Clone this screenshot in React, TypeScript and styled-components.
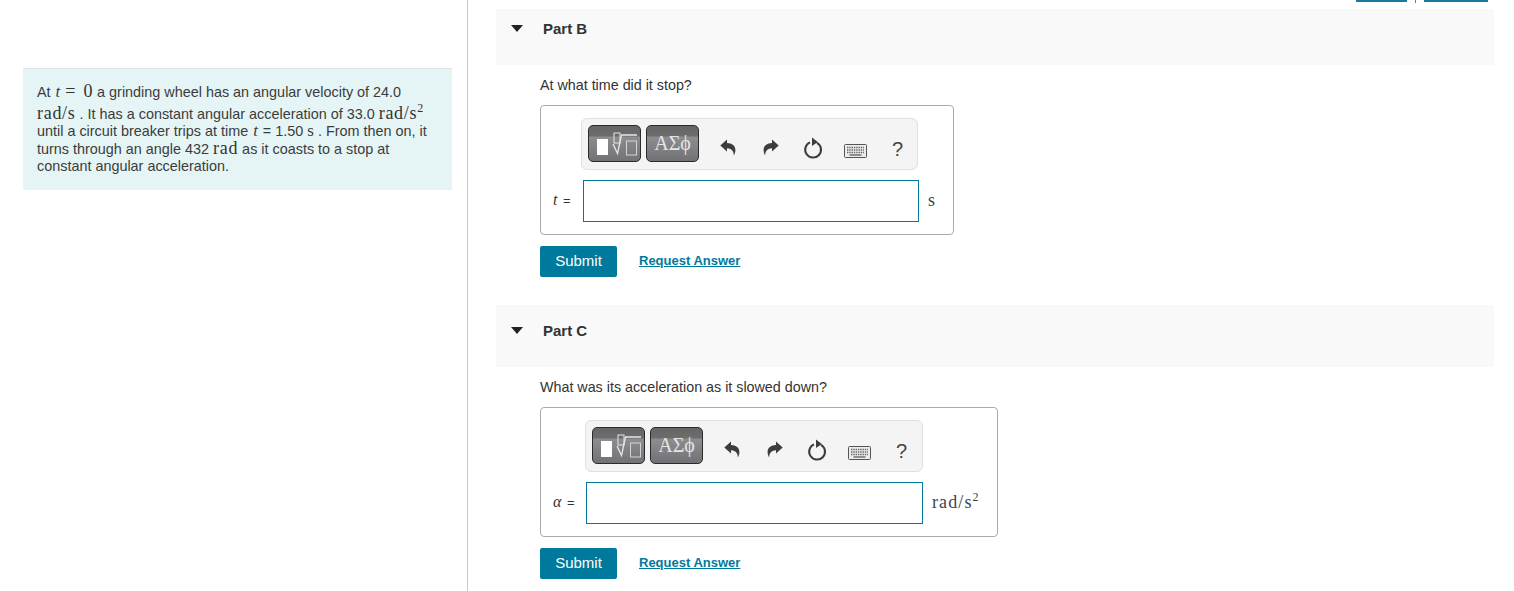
import React from "react";
import styled, { createGlobalStyle } from "styled-components";

const GlobalStyle = createGlobalStyle`
  html, body {
    margin: 0;
    padding: 0;
    background: #fff;
    overflow: hidden;
  }
  body {
    font-family: "Liberation Sans", Arial, sans-serif;
    font-size: 14px;
    color: #333;
  }
`;

function UndoIcon({ flip }: { flip?: boolean }) {
  return (
    <svg width="16" height="17" viewBox="0 0 16 17" style={flip ? { transform: "scaleX(-1)" } : undefined}>
      <path
        d="M0.3 6.4 L7 0.6 V4 C12 4 15.6 6.8 15.4 11.4 C15.3 13 14.8 14.8 13.8 16.6 C13.9 13.2 12.4 9.2 7 9.2 V12.4 Z"
        fill="#3d3d3d"
      />
    </svg>
  );
}

function ResetIcon() {
  return (
    <svg width="20" height="22" viewBox="0 0 20 22">
      <path d="M7 5.4 A7.9 7.9 0 1 0 14 5.8" fill="none" stroke="#3d3d3d" strokeWidth="2.1" />
      <path d="M9 0.6 L14.8 5 L9 9 Z" fill="#3d3d3d" />
    </svg>
  );
}

function KeyboardIcon() {
  return (
    <svg width="23" height="14" viewBox="0 0 23 14">
      <rect x="0.5" y="0.5" width="22" height="13" rx="1" fill="#ececec" stroke="#555" />
      <path d="M3 3.5 H20 M3 6 H20 M3 8.5 H20" stroke="#666" strokeWidth="1.4" strokeDasharray="1.4 0.9" />
      <path d="M5.5 11 H17.5" stroke="#666" strokeWidth="1.4" />
    </svg>
  );
}

function TemplateIcon() {
  return (
    <svg width="51" height="35" viewBox="0 0 51 35">
      <rect x="8" y="13" width="11" height="16" fill="#fff" />
      <rect x="25" y="7" width="6" height="10" fill="none" stroke="#e6e6e6" strokeWidth="1" />
      <path d="M24 18 L28.5 27.5 L32.5 9 H48" fill="none" stroke="#e6e6e6" strokeWidth="1.3" />
      <rect x="37.5" y="15" width="10" height="14" fill="none" stroke="#d4d4d4" strokeWidth="1" />
    </svg>
  );
}

interface IPart {
  title: string;
  question: string;
  symbol: string;
  unit: React.ReactNode;
  headerHeight: number;
  titleTop: number;
  toolbarLeft: number;
  toolbarWidth: number;
  labelWidth: number;
  inputWidth: number;
  boxWidth: number;
  spaced?: boolean;
}

function Part({
  title,
  question,
  symbol,
  unit,
  headerHeight,
  titleTop,
  toolbarLeft,
  toolbarWidth,
  labelWidth,
  inputWidth,
  boxWidth,
  spaced,
}: IPart) {
  return (
    <PartSection $spaced={spaced}>
      <PartHeader $height={headerHeight} $top={titleTop}>
        <Caret />
        <PartTitle>{title}</PartTitle>
      </PartHeader>
      <PartBody>
        <Question>{question}</Question>
        <AnswerBox $width={boxWidth}>
          <Toolbar $left={toolbarLeft} $width={toolbarWidth}>
            <ToolGroup>
              <ToolButton>
                <TemplateIcon />
              </ToolButton>
              <ToolButton>
                <GreekLabel>ΑΣϕ</GreekLabel>
              </ToolButton>
            </ToolGroup>
            <ToolIcon $left={21} $top={7}><UndoIcon /></ToolIcon>
            <ToolIcon $left={27} $top={7}><UndoIcon flip /></ToolIcon>
            <ToolIcon $left={24} $top={8}><ResetIcon /></ToolIcon>
            <ToolIcon $left={21} $top={14}><KeyboardIcon /></ToolIcon>
            <Help>?</Help>
          </Toolbar>
          <AnswerRow>
            <SymbolLabel $width={labelWidth}>
              <LabelMath>{symbol}</LabelMath> =
            </SymbolLabel>
            <AnswerInput $width={inputWidth} />
            <Unit>{unit}</Unit>
          </AnswerRow>
        </AnswerBox>
        <Actions>
          <SubmitButton>Submit</SubmitButton>
          <RequestLink href="#">Request Answer</RequestLink>
        </Actions>
      </PartBody>
    </PartSection>
  );
}

export default function App() {
  return (
    <Page>
      <GlobalStyle />
      <LeftColumn>
        <ProblemBox>
          At <MathItalic>t</MathItalic> <MathText>= 0</MathText> a grinding wheel has an angular velocity of 24.0{" "}
          <MathText>rad/s</MathText> . It has a constant angular acceleration of 33.0{" "}
          <MathText>
            rad/s<sup>2</sup>
          </MathText>{" "}
          until a circuit breaker trips at time <MathItalic>t</MathItalic> = 1.50 <SmallMath>s</SmallMath> . From then on, it
          turns through an angle 432 <MathText>rad</MathText> as it coasts to a stop at constant angular acceleration.
        </ProblemBox>
      </LeftColumn>
      <RightColumn>
        <TopLinks>
          <TopLink $width={51} />
          <TopDivider />
          <TopLink $width={64} />
        </TopLinks>
        <Part
          title="Part B"
          question="At what time did it stop?"
          symbol="t"
          unit="s"
          headerHeight={56}
          titleTop={12}
          toolbarLeft={40}
          toolbarWidth={337}
          labelWidth={42}
          inputWidth={336}
          boxWidth={414}
        />
        <Part
          spaced
          title="Part C"
          question="What was its acceleration as it slowed down?"
          symbol="α"
          unit={
            <>
              rad/s<sup>2</sup>
            </>
          }
          headerHeight={62}
          titleTop={18}
          toolbarLeft={44}
          toolbarWidth={338}
          labelWidth={45}
          inputWidth={337}
          boxWidth={458}
        />
      </RightColumn>
    </Page>
  );
}

const Page = styled.div`
  display: flex;
  width: 1514px;
  height: 591px;
  overflow: hidden;
`;

const LeftColumn = styled.aside`
  box-sizing: border-box;
  width: 468px;
  height: 591px;
  flex-shrink: 0;
  padding: 68px 15px 0 23px;
  border-right: 1px solid #c8c8c8;
`;

const ProblemBox = styled.div`
  box-sizing: border-box;
  width: 429px;
  height: 122px;
  padding: 15px 20px 0 14px;
  background: #e5f5f6;
  border-top: 1px solid #dfe5e6;
  font-size: 14.4px;
  line-height: 17.5px;
  color: #3c3c3c;

  sup {
    font-size: 12px;
    line-height: 12px;
    vertical-align: 7px;
  }
`;

const MathText = styled.span`
  font-family: "Liberation Serif", "DejaVu Serif", serif;
  font-size: 18px;
  line-height: 0;
  letter-spacing: 0.7px;
  word-spacing: 2px;
  color: #333;
`;

const SmallMath = styled.span`
  font-family: "Liberation Serif", "DejaVu Serif", serif;
  font-size: 17px;
  line-height: 0;
`;

const MathItalic = styled.span`
  font-family: "Liberation Serif", "DejaVu Serif", serif;
  font-style: italic;
  font-size: 17px;
  line-height: 0;
  margin: 0 1px;
`;

const RightColumn = styled.main`
  box-sizing: border-box;
  width: 1046px;
  flex-shrink: 0;
  padding-left: 28px;
`;

const TopLinks = styled.div`
  display: flex;
  justify-content: flex-end;
  align-items: flex-start;
  width: 992px;
  height: 9px;
`;

const TopLink = styled.div<{ $width: number }>`
  width: ${(p) => p.$width}px;
  height: 2px;
  background: #1a7a9c;
`;

const TopDivider = styled.div`
  width: 1px;
  height: 3px;
  margin: 0 8px;
  background: #8c6a70;
`;

const PartSection = styled.section<{ $spaced?: boolean }>`
  width: 998px;
  margin-top: ${(p) => (p.$spaced ? "28px" : "0")};
`;

const PartHeader = styled.div<{ $height: number; $top: number }>`
  box-sizing: border-box;
  display: flex;
  align-items: flex-start;
  height: ${(p) => p.$height}px;
  padding: ${(p) => p.$top}px 0 0 15px;
  background: #f9f9f9;
`;

const Caret = styled.span`
  width: 0;
  height: 0;
  margin-top: 4px;
  border-left: 6.5px solid transparent;
  border-right: 6.5px solid transparent;
  border-top: 7px solid #222;
`;

const PartTitle = styled.h3`
  margin: 0 0 0 20px;
  font-size: 15px;
  line-height: 16px;
  font-weight: 700;
  color: #333;
`;

const PartBody = styled.div`
  padding: 12px 0 0 44px;
`;

const Question = styled.p`
  margin: 0;
  font-size: 14.3px;
  line-height: 17px;
  color: #333;
`;

const AnswerBox = styled.div<{ $width: number }>`
  box-sizing: border-box;
  width: ${(p) => p.$width}px;
  margin-top: 11px;
  padding: 12px 0;
  border: 1px solid #aaa;
  border-radius: 4px;
`;

const Toolbar = styled.div<{ $left: number; $width: number }>`
  box-sizing: border-box;
  display: flex;
  align-items: center;
  width: ${(p) => p.$width}px;
  height: 52px;
  margin-left: ${(p) => p.$left}px;
  padding: 0 0 1px 6px;
  background: #f4f4f4;
  border: 1px solid #e0e0e0;
  border-radius: 6px;
`;

const ToolGroup = styled.div`
  display: flex;
  gap: 5px;
`;

const ToolButton = styled.div`
  box-sizing: border-box;
  display: flex;
  align-items: center;
  justify-content: center;
  width: 53px;
  height: 37px;
  border: 1px solid #2b2b2b;
  border-radius: 5px;
  background: linear-gradient(#666 0, #6c6c6c 28%, #8d8d91 32%, #727276 100%);
`;

const GreekLabel = styled.span`
  font-family: "Liberation Serif", "DejaVu Serif", serif;
  font-size: 20px;
  color: #e4e4e4;
`;

const ToolIcon = styled.div<{ $left: number; $top: number }>`
  display: flex;
  align-items: center;
  margin-left: ${(p) => p.$left}px;
  margin-top: ${(p) => p.$top}px;
`;

const Help = styled.span`
  margin-left: 25px;
  margin-top: 11px;
  font-size: 20px;
  color: #444;
`;

const AnswerRow = styled.div`
  display: flex;
  align-items: center;
  margin-top: 10px;
`;

const SymbolLabel = styled.label<{ $width: number }>`
  box-sizing: border-box;
  width: ${(p) => p.$width}px;
  padding: 0 0 2px 12px;
  font-size: 13px;
  word-spacing: 2px;
  color: #333;
  white-space: nowrap;
`;

const LabelMath = styled.span`
  font-family: "Liberation Serif", "DejaVu Serif", serif;
  font-style: italic;
  font-size: 16px;
`;

const AnswerInput = styled.div<{ $width: number }>`
  box-sizing: border-box;
  width: ${(p) => p.$width}px;
  height: 42px;
  background: #fff;
  border: 1px solid #007a9c;
`;

const Unit = styled.span`
  margin: 0 0 2px 9px;
  font-family: "Liberation Serif", "DejaVu Serif", serif;
  font-size: 18px;
  letter-spacing: 1.1px;
  color: #3a4550;

  sup {
    font-size: 12px;
    line-height: 0;
  }
`;

const Actions = styled.div`
  display: flex;
  align-items: center;
  margin-top: 11px;
`;

const SubmitButton = styled.button`
  box-sizing: border-box;
  width: 77px;
  height: 31px;
  padding: 0 0 2px;
  background: #007a9c;
  border: none;
  border-radius: 2px;
  color: #fff;
  font-family: "Liberation Sans", Arial, sans-serif;
  font-size: 15px;
`;

const RequestLink = styled.a`
  margin: 0 0 2px 22px;
  color: #007a9c;
  font-size: 13px;
  font-weight: 700;
  text-decoration: underline;
`;
